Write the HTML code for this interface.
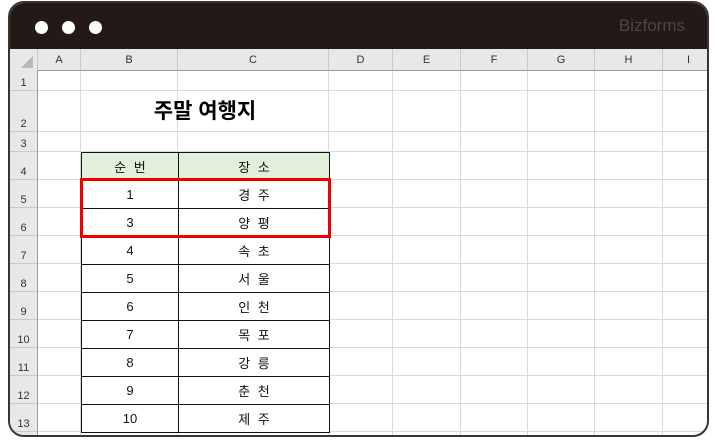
<!DOCTYPE html>
<html><head><meta charset="utf-8"><style>
*{margin:0;padding:0;box-sizing:border-box}
html,body{width:715px;height:440px;overflow:hidden}
body{background:#fff;position:relative;font-family:"Liberation Sans","Noto Sans CJK KR",sans-serif}
.frame{position:absolute;left:8px;top:1px;width:701px;height:436px;border:2px solid #3a3533;border-radius:16px;overflow:hidden;background:#fff}
.top{position:absolute;left:0;top:0;right:0;height:46px;background:#231916}
.dot{position:absolute;top:18px;width:13px;height:13px;border-radius:50%;background:#fff}
.logo{position:absolute;right:22px;top:13px;color:#4e4441;font-size:17px}
.a{position:absolute}
.vl{position:absolute;width:1px;background:#d9d9d9}
.hl{position:absolute;height:1px;background:#d9d9d9}
.ch{position:absolute;top:46px;height:22px;background:#e8e8e8;font-size:11px;color:#333;text-align:center;line-height:22px;border-right:1px solid #c8c8c8;border-bottom:1px solid #9a9a9a}
.rh{position:absolute;left:0;width:28px;background:#e8e8e8;font-size:11px;color:#333;text-align:center;border-bottom:1px solid #c8c8c8;border-right:1px solid #9a9a9a}
.rh span{position:absolute;bottom:1px;left:0;right:0}
.c{position:absolute;font-size:13px;color:#111;text-align:center;border:1px solid #111;display:flex;align-items:center;justify-content:center;white-space:pre}
.k{letter-spacing:2px;padding-left:2px}
</style></head><body>
<div class="frame">
<div class="top"><div class="dot" style="left:25px"></div><div class="dot" style="left:52px"></div><div class="dot" style="left:79px"></div><div class="logo">Bizforms</div></div>
</div>
<script>
var f=document.querySelector('.frame'),h='';
var ox=10,oy=3;
var cols=[['A',38,81],['B',81,178],['C',178,329],['D',329,393],['E',393,461],['F',461,528],['G',528,595],['H',595,663],['I',663,715]];
var rows=[70,91,132,152,180,208,236,264,292,320,348,376,404,432,460];
cols.forEach(c=>{h+='<div class="vl" style="left:'+(c[2]-ox-1)+'px;top:68px;height:370px"></div>';});
rows.forEach(r=>{h+='<div class="hl" style="left:28px;width:670px;top:'+(r-oy-1)+'px"></div>';});
h+='<div class="ch" style="left:0;width:28px"><svg width="14" height="14" style="position:absolute;left:10px;top:6px"><polygon points="13,1 13,13 1,13" fill="#b8b8b8"/></svg></div>';
cols.forEach(c=>{h+='<div class="ch" style="left:'+(c[1]-ox)+'px;width:'+(c[2]-c[1])+'px">'+c[0]+'</div>';});
for(var i=0;i<14;i++){h+='<div class="rh" style="top:'+(rows[i]-oy)+'px;height:'+(rows[i+1]-rows[i])+'px"><span>'+(i+1)+'</span></div>';}
h+='<div class="a" style="left:'+(81-ox)+'px;top:'+(91-oy)+'px;width:248px;height:41px;font-size:21px;font-weight:bold;text-align:center;line-height:42px">주말 여행지</div>';
var d=[['순 번','장 소'],['1','경 주'],['3','양 평'],['4','속 초'],['5','서 울'],['6','인 천'],['7','목 포'],['8','강 릉'],['9','춘 천'],['10','제 주']];
d.forEach((r,i)=>{var t=rows[i+3]-oy,hh=rows[i+4]-rows[i+3];var bg=i==0?'background:#e2efda;':'background:#fff;';
h+='<div class="c'+(i==0?' k':'')+'" style="'+bg+'left:'+(81-ox)+'px;top:'+t+'px;width:98px;height:'+(hh+1)+'px">'+r[0]+'</div>';
h+='<div class="c k" style="'+bg+'left:'+(178-ox)+'px;top:'+t+'px;width:152px;height:'+(hh+1)+'px">'+r[1]+'</div>';});
h+='<div class="a" style="left:'+(80-ox)+'px;top:'+(178-oy)+'px;width:251px;height:60px;border:3px solid #e00"></div>';
f.insertAdjacentHTML('beforeend',h);
</script>
</body></html>
